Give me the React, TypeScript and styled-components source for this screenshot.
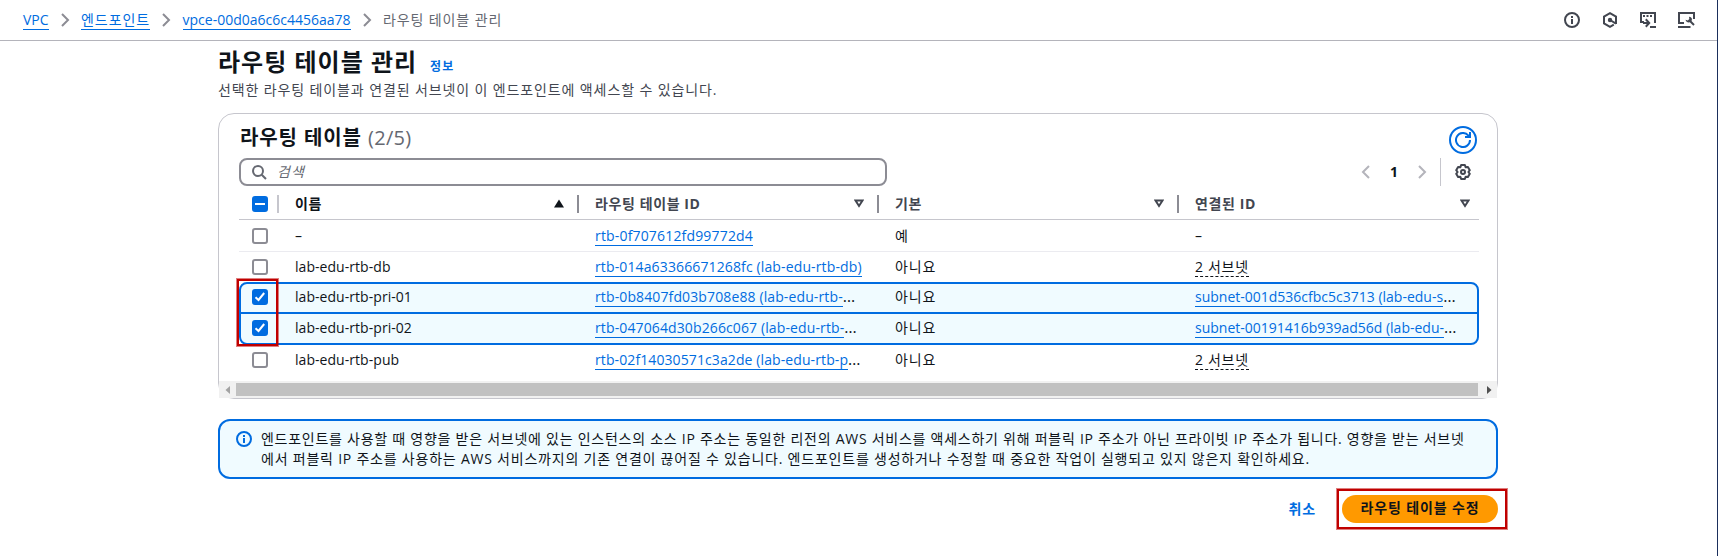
import React from 'react';
import styled, { createGlobalStyle } from 'styled-components';

const GlobalStyle = createGlobalStyle`
  *, *::before, *::after { box-sizing: border-box; }
  body {
    margin: 0;
    background: #fff;
    color: #0f141a;
    font: 400 14px/20px "Open Sans", "Noto Sans CJK KR", sans-serif;
    overflow: hidden;
  }
  h1, h2, p { margin: 0; }
  svg { display: block; flex: none; }
`;

const Page = styled.div`
  height: 556px;
  border-right: 1px solid #1b2f5c;
`;

const TopBar = styled.header`
  display: flex;
  align-items: center;
  justify-content: space-between;
  height: 41px;
  padding: 0 22px 0 23px;
  border-bottom: 1px solid #b4b4bb;
`;

const Breadcrumbs = styled.nav`
  display: flex;
  align-items: center;
  gap: 12.2px;
`;

const Link = styled.a<{ $spacing?: number }>`
  color: #006ce0;
  border-bottom: 1px solid #006ce0;
  letter-spacing: ${(p) => p.$spacing ?? 0}px;
`;

const Crumb = styled(Link)`
  display: block;
  height: 20px;
  line-height: 20px;
`;

const Current = styled.span`
  color: #656871;
  letter-spacing: 0.9px;
`;

const Tools = styled.div`
  display: flex;
  gap: 22px;
  color: #424650;
`;

const Main = styled.main`
  width: 1280px;
  margin-left: 218px;
  padding-top: 6px;
`;

const TitleRow = styled.div`
  display: flex;
  align-items: baseline;
  gap: 13px;
`;

const Title = styled.h1`
  font-size: 24px;
  line-height: 30px;
  font-weight: 700;
  letter-spacing: 1px;
`;

const InfoLink = styled.a`
  color: #006ce0;
  font-size: 12px;
  font-weight: 700;
  letter-spacing: 1px;
`;

const Subtitle = styled.p`
  margin-top: 3px;
  color: #424650;
  letter-spacing: 0.88px;
`;

const Card = styled.section`
  height: 286px;
  margin-top: 13px;
  padding-top: 12px;
  border: 1px solid #c6c6cd;
  border-radius: 16px;
`;

const CardBody = styled.div`
  height: 255px;
  padding: 0 18px 0 20px;
`;

const CardHeader = styled.div`
  display: flex;
  justify-content: space-between;
  height: 32px;
  padding-right: 2px;
`;

const CardTitle = styled.h2`
  padding-left: 1px;
  font-size: 20px;
  line-height: 24px;
  font-weight: 700;
  letter-spacing: 0.9px;
`;

const Counter = styled.span`
  color: #656871;
  font-weight: 400;
  letter-spacing: 0.3px;
`;

const RefreshButton = styled.button`
  display: flex;
  align-items: center;
  justify-content: center;
  width: 28px;
  height: 28px;
  padding: 0;
  color: #006ce0;
  background: #fff;
  border: 2px solid currentColor;
  border-radius: 50%;
`;

const Toolbar = styled.div`
  display: flex;
  align-items: center;
  justify-content: space-between;
  height: 28px;
`;

const SearchBox = styled.div`
  display: flex;
  align-items: center;
  gap: 10px;
  width: 648px;
  height: 28px;
  padding: 0 10px;
  color: #656871;
  border: 2px solid #8c8c94;
  border-radius: 8px;
`;

const Placeholder = styled.span`
  font-style: italic;
  letter-spacing: 1px;
`;

const Pagination = styled.div`
  display: flex;
  align-items: center;
  height: 28px;
  padding-right: 8px;
  color: #b4b4bb;
`;

const PageNumber = styled.span`
  width: 42px;
  color: #0f141a;
  font-weight: 700;
  text-align: center;
`;

const Preferences = styled.div`
  display: flex;
  align-items: center;
  height: 28px;
  margin-left: 11px;
  padding-left: 14px;
  color: #424650;
  border-left: 1px solid #c6c6cd;
`;

const GridRow = styled.div`
  display: grid;
  grid-template-columns: 56px 300px 300px 300px 284px;
  align-items: center;
`;

const HeadRow = styled(GridRow)`
  height: 34px;
  margin-bottom: 1px;
  padding-top: 2px;
  border-bottom: 1px solid #c6c6cd;
`;

const HeadCell = styled.div<{ $active?: boolean; $last?: boolean }>`
  display: flex;
  align-items: center;
  justify-content: space-between;
  padding-right: ${(p) => (p.$last ? 9 : 16)}px;
  color: ${(p) => (p.$active ? '#0f141a' : '#424650')};
  font-weight: 700;
  letter-spacing: 0.6px;
`;

const SortControls = styled.div`
  display: flex;
  align-items: center;
  gap: 13px;
`;

const Divider = styled.i<{ $light?: boolean }>`
  width: 2px;
  height: 18px;
  margin-top: 1px;
  background: ${(p) => (p.$light ? '#c6c6cd' : '#8c8c94')};
`;

const SelectCell = styled.div<{ $inset?: number }>`
  display: flex;
  align-items: center;
  gap: 9px;
  padding-left: ${(p) => p.$inset ?? 13}px;
`;

const Box = styled.span<{ $on?: boolean }>`
  display: flex;
  align-items: center;
  justify-content: center;
  width: 16px;
  height: 16px;
  border: 2px solid ${(p) => (p.$on ? '#006ce0' : '#8c8c94')};
  border-radius: 3px;
  background: ${(p) => (p.$on ? '#006ce0' : '#fff')};
`;

type Edge = 'none' | 'first' | 'last';

const Row = styled(GridRow)<{ $edge: Edge; $line?: boolean }>`
  height: 31px;
  padding-bottom: ${(p) => (p.$line ? 0 : 1)}px;
  border-bottom: ${(p) => (p.$line ? '1px solid #ebebf0' : '0')};
  ${(p) =>
    p.$edge !== 'none' &&
    `
    grid-template-columns: 54px 300px 300px 300px 282px;
    background: #f0fbff;
    border: 2px solid #006ce0;
    `}
  ${(p) => p.$edge === 'first' && 'height: 32px; margin-top: -1px; padding-bottom: 2px; border-radius: 8px 8px 0 0;'}
  ${(p) => p.$edge === 'last' && 'height: 33px; margin-top: -2px; border-radius: 0 0 8px 8px;'}
`;

const Cell = styled.div<{ $spacing?: number }>`
  white-space: nowrap;
  letter-spacing: ${(p) => p.$spacing ?? 0.05}px;
`;

const Ellipsis = styled.span`
  font-size: 16px;
  line-height: 1;
  letter-spacing: 0.6px;
`;

const Popover = styled.span`
  border-bottom: 1px dashed #0f141a;
  letter-spacing: 0.7px;
`;

const Scrollbar = styled.div`
  display: flex;
  align-items: center;
  height: 17px;
  padding-left: 6px;
  background: #f1f1f1;
`;

const Thumb = styled.div`
  width: 1242px;
  height: 13px;
  margin: 0 9px 0 6px;
  background: #c1c1c1;
`;

const Alert = styled.div`
  display: flex;
  gap: 9px;
  height: 60px;
  margin-top: 20px;
  padding: 8px 16px;
  color: #0f141a;
  background: #f0fbff;
  border: 2px solid #006ce0;
  border-radius: 12px;
`;

const AlertIcon = styled.div`
  padding-top: 2px;
  color: #006ce0;
`;

const AlertText = styled.p`
  white-space: nowrap;
`;

const AlertLine = styled.span<{ $spacing: number }>`
  display: block;
  letter-spacing: ${(p) => p.$spacing}px;
`;

const Footer = styled.footer`
  display: flex;
  align-items: center;
  justify-content: flex-end;
  gap: 26px;
  margin-top: 16px;
`;

const CancelButton = styled.button`
  padding: 0;
  color: #006ce0;
  background: none;
  border: 0;
  font: inherit;
  font-weight: 700;
  letter-spacing: 0.9px;
`;

const SubmitWrap = styled.div`
  position: relative;
`;

const SubmitButton = styled.button`
  display: block;
  width: 156px;
  height: 28px;
  padding: 0 0 2px;
  color: #0f141a;
  background: #ff9900;
  border: 0;
  border-radius: 14px;
  font: inherit;
  font-weight: 700;
  letter-spacing: 0.85px;
`;

const Highlight = styled.div<{ $box: [number, number, number, number] }>`
  position: absolute;
  top: ${(p) => p.$box[0]}px;
  left: ${(p) => p.$box[1]}px;
  width: ${(p) => p.$box[2]}px;
  height: ${(p) => p.$box[3]}px;
  border: 2px solid #c00000;
  box-shadow: 0 0 0 1px rgba(192, 0, 0, 0.5);
`;

const SelectedGroup = styled.div`
  position: relative;
`;

const Chevron = ({ left }: { left?: boolean }) => (
  <svg width="14" height="16" viewBox="0 0 14 16" fill="none" stroke="currentColor" strokeWidth="2">
    <path d={left ? 'M10 2 4 8l6 6' : 'M4 2l6 6-6 6'} />
  </svg>
);

const CrumbSeparator = styled.span`
  display: flex;
  width: 8px;
  justify-content: center;
  color: #8c8c94;
`;

const InfoIcon = () => (
  <svg width="16" height="16" viewBox="0 0 16 16" fill="none" stroke="currentColor" strokeWidth="2">
    <circle cx="8" cy="8" r="7" />
    <path d="M8 7v5M8 4v2" />
  </svg>
);

const HexIcon = () => (
  <svg width="16" height="16" viewBox="0 0 16 16" fill="none" stroke="currentColor" strokeWidth="2">
    <path d="M14 12V4.600L8 1.200 2 4.600v6.800l6 3.400 3.800-2.100" />
    <path d="M8 8l6 3.600" />
    <circle cx="8" cy="8" r="2.200" fill="currentColor" stroke="none" />
  </svg>
);

const ShellIcon = () => (
  <svg width="16" height="16" viewBox="0 0 16 16" fill="none" stroke="currentColor" strokeWidth="2">
    <path d="M4 10H1V1h14v10M10 15h6M3 11h6M5.800 7.300 9.200 11l-3.400 3.700" />
    <path d="M3 4h2M6.500 4h2M10 4h2" />
  </svg>
);

const ToolboxIcon = () => (
  <svg width="17" height="16" viewBox="0 0 17 16" fill="none" stroke="currentColor" strokeWidth="2">
    <path d="M6 11H1V1h15v6M0 15h12.500" />
    <path d="M11.500 8.500 16 13" />
    <path d="M11 4.800c2 0 3.200 1.400 2.900 3l-.6 1.700-1.600.8c-2 .4-3.900-.6-4.200-2.500l2.300.6 1.500-1.300z" fill="currentColor" stroke="none" />
  </svg>
);

const RefreshIcon = () => (
  <svg width="16" height="16" viewBox="0 0 16 16" fill="none" stroke="currentColor" strokeWidth="2">
    <path d="M15 8a7 7 0 1 1-1.800-4.700L14.500 5" />
    <path d="M15 0v5h-5" />
  </svg>
);

const SearchIcon = () => (
  <svg width="16" height="16" viewBox="0 0 16 16" fill="none" stroke="currentColor" strokeWidth="2">
    <circle cx="7" cy="7" r="5" />
    <path d="M10.700 10.700 15 15" />
  </svg>
);

const GearIcon = () => (
  <svg width="16" height="16" viewBox="0 0 16 16" fill="none" stroke="currentColor" strokeWidth="2" strokeLinejoin="round">
    <path d="M6.100 1.100h3.800l.8 2.200 2.200-.4 1.900 3.300L13.400 8l1.400 1.800-1.900 3.300-2.200-.4-.8 2.200H6.100l-.8-2.200-2.200.4-1.900-3.300L2.600 8 1.200 6.200l1.900-3.300 2.200.4z" />
    <circle cx="8" cy="8" r="2" />
  </svg>
);

const SortIcon = ({ up }: { up?: boolean }) => (
  <svg width="10" height="9" viewBox="0 0 10 9">
    {up ? (
      <path d="M5 .500 10 8.500H0z" fill="currentColor" />
    ) : (
      <path d="M1.500 1.500h7L5 7z" fill="none" stroke="currentColor" strokeWidth="2" />
    )}
  </svg>
);

const CheckIcon = () => (
  <svg width="12" height="12" viewBox="0 0 12 12" fill="none" stroke="#fff" strokeWidth="2">
    <path d="M1.500 6.200 4.500 9l5.700-7" />
  </svg>
);

const DashIcon = () => (
  <svg width="10" height="2" viewBox="0 0 10 2">
    <path d="M0 1h10" stroke="#fff" strokeWidth="2" />
  </svg>
);

const Arrow = ({ left }: { left?: boolean }) => (
  <svg width="5" height="8" viewBox="0 0 5 8">
    <path d={left ? 'M5 0v8L.500 4z' : 'M0 0v8l4.500-4z'} fill={left ? '#a3a3a3' : '#505050'} />
  </svg>
);

interface Item {
  name: string;
  id: string;
  idSpacing: number;
  idCut?: boolean;
  main: string;
  assoc: string;
  assocKind: 'plain' | 'popover' | 'link';
  selected: Edge;
  line?: boolean;
}

const items: Item[] = [
  { name: '–', id: 'rtb-0f707612fd99772d4', idSpacing: 0.17, main: '예', assoc: '–', assocKind: 'plain', selected: 'none', line: true },
  { name: 'lab-edu-rtb-db', id: 'rtb-014a63366671268fc (lab-edu-rtb-db)', idSpacing: 0.13, main: '아니요', assoc: '2 서브넷', assocKind: 'popover', selected: 'none' },
  { name: 'lab-edu-rtb-pri-01', id: 'rtb-0b8407fd03b708e88 (lab-edu-rtb-', idSpacing: 0.12, idCut: true, main: '아니요', assoc: 'subnet-001d536cfbc5c3713 (lab-edu-s', assocKind: 'link', selected: 'first' },
  { name: 'lab-edu-rtb-pri-02', id: 'rtb-047064d30b266c067 (lab-edu-rtb-', idSpacing: 0.12, idCut: true, main: '아니요', assoc: 'subnet-00191416b939ad56d (lab-edu-', assocKind: 'link', selected: 'last' },
  { name: 'lab-edu-rtb-pub', id: 'rtb-02f14030571c3a2de (lab-edu-rtb-p', idSpacing: 0.1, idCut: true, main: '아니요', assoc: '2 서브넷', assocKind: 'popover', selected: 'none' },
];

const ItemRow = ({ item }: { item: Item }) => {
  const on = item.selected !== 'none';
  return (
    <Row $edge={item.selected} $line={item.line}>
      <SelectCell $inset={on ? 11 : 13}>
        <Box $on={on}>{on && <CheckIcon />}</Box>
      </SelectCell>
      <Cell>{item.name}</Cell>
      <Cell>
        <Link $spacing={item.idSpacing}>{item.id}</Link>
        {item.idCut && <Ellipsis>…</Ellipsis>}
      </Cell>
      <Cell $spacing={0.9}>{item.main}</Cell>
      <Cell>
        {item.assocKind === 'link' && (
          <>
            <Link>{item.assoc}</Link>
            <Ellipsis>…</Ellipsis>
          </>
        )}
        {item.assocKind === 'popover' && <Popover>{item.assoc}</Popover>}
        {item.assocKind === 'plain' && item.assoc}
      </Cell>
    </Row>
  );
};

export default function App() {
  return (
    <Page>
      <GlobalStyle />
      <TopBar>
        <Breadcrumbs>
          <Crumb>VPC</Crumb>
          <CrumbSeparator><Chevron /></CrumbSeparator>
          <Crumb $spacing={0.95}>엔드포인트</Crumb>
          <CrumbSeparator><Chevron /></CrumbSeparator>
          <Crumb>vpce-00d0a6c6c4456aa78</Crumb>
          <CrumbSeparator><Chevron /></CrumbSeparator>
          <Current>라우팅 테이블 관리</Current>
        </Breadcrumbs>
        <Tools>
          <InfoIcon />
          <HexIcon />
          <ShellIcon />
          <ToolboxIcon />
        </Tools>
      </TopBar>

      <Main>
        <TitleRow>
          <Title>라우팅 테이블 관리</Title>
          <InfoLink>정보</InfoLink>
        </TitleRow>
        <Subtitle>선택한 라우팅 테이블과 연결된 서브넷이 이 엔드포인트에 액세스할 수 있습니다.</Subtitle>

        <Card>
          <CardBody>
            <CardHeader>
              <CardTitle>
                라우팅 테이블 <Counter>(2/5)</Counter>
              </CardTitle>
              <RefreshButton><RefreshIcon /></RefreshButton>
            </CardHeader>
            <Toolbar>
              <SearchBox>
                <SearchIcon />
                <Placeholder>검색</Placeholder>
              </SearchBox>
              <Pagination>
                <Chevron left />
                <PageNumber>1</PageNumber>
                <Chevron />
                <Preferences><GearIcon /></Preferences>
              </Pagination>
            </Toolbar>
            <HeadRow>
              <SelectCell>
                <Box $on><DashIcon /></Box>
                <Divider $light />
              </SelectCell>
              <HeadCell $active>
                이름
                <SortControls><SortIcon up /><Divider /></SortControls>
              </HeadCell>
              <HeadCell>
                라우팅 테이블 ID
                <SortControls><SortIcon /><Divider /></SortControls>
              </HeadCell>
              <HeadCell>
                기본
                <SortControls><SortIcon /><Divider /></SortControls>
              </HeadCell>
              <HeadCell $last>
                연결된 ID
                <SortIcon />
              </HeadCell>
            </HeadRow>
            {items.slice(0, 2).map((item) => <ItemRow key={item.name} item={item} />)}
            <SelectedGroup>
              {items.slice(2, 4).map((item) => <ItemRow key={item.name} item={item} />)}
              <Highlight $box={[-3, -2, 41, 67]} />
            </SelectedGroup>
            {items.slice(4).map((item) => <ItemRow key={item.name} item={item} />)}
          </CardBody>
          <Scrollbar>
            <Arrow left />
            <Thumb />
            <Arrow />
          </Scrollbar>
        </Card>

        <Alert>
          <AlertIcon><InfoIcon /></AlertIcon>
          <AlertText>
            <AlertLine $spacing={0.74}>
              엔드포인트를 사용할 때 영향을 받은 서브넷에 있는 인스턴스의 소스 IP 주소는 동일한 리전의 AWS 서비스를 액세스하기 위해 퍼블릭 IP 주소가 아닌 프라이빗 IP 주소가 됩니다. 영향을 받는 서브넷
            </AlertLine>
            <AlertLine $spacing={0.78}>
              에서 퍼블릭 IP 주소를 사용하는 AWS 서비스까지의 기존 연결이 끊어질 수 있습니다. 엔드포인트를 생성하거나 수정할 때 중요한 작업이 실행되고 있지 않은지 확인하세요.
            </AlertLine>
          </AlertText>
        </Alert>

        <Footer>
          <CancelButton>취소</CancelButton>
          <SubmitWrap>
            <SubmitButton>라우팅 테이블 수정</SubmitButton>
            <Highlight $box={[-6, -5, 170, 40]} />
          </SubmitWrap>
        </Footer>
      </Main>
    </Page>
  );
}
